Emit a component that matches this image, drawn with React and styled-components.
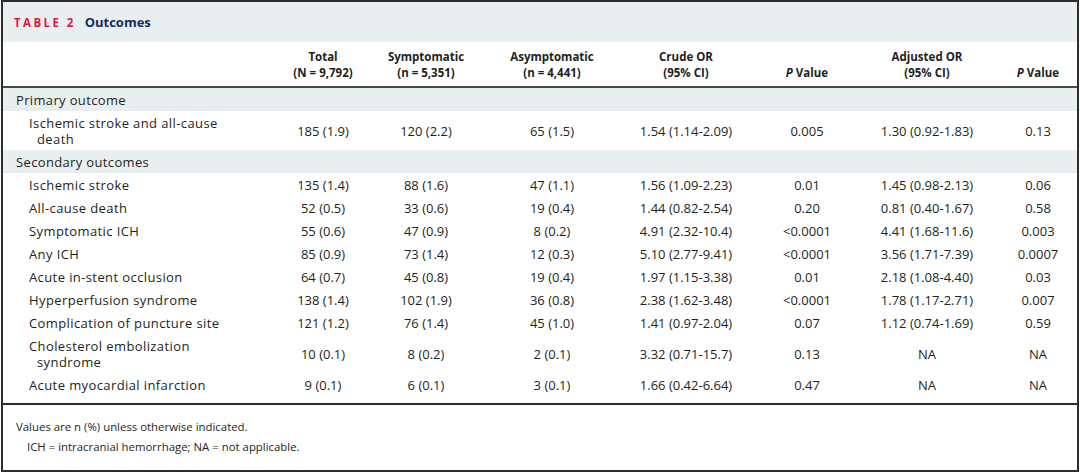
import React from "react";
import styled, { createGlobalStyle } from "styled-components";

const GlobalStyle = createGlobalStyle`
  html, body {
    margin: 0;
    padding: 0;
    background: #ffffff;
  }
  body {
    font-family: "Open Sans", "Noto Sans", sans-serif;
    color: #231f20;
  }
`;

const Frame = styled.div`
  box-sizing: border-box;
  width: 1078px;
  height: 472px;
  margin: 0 1px;
  border: 2px solid #2d2d2d;
  display: flex;
  flex-direction: column;
  background: #fff;
`;

const TitleBar = styled.div`
  height: 40px;
  background: #e9eff0;
  display: flex;
  align-items: center;
  gap: 9px;
  padding: 0 11px;
  font-weight: 700;
`;

const Label = styled.span`
  color: #e3193e;
  font-size: 11.5px;
  letter-spacing: 2.4px;
`;

const Caption = styled.span`
  color: #182c59;
  font-size: 13px;
`;

const Table = styled.table`
  width: 100%;
  border-collapse: collapse;
  table-layout: fixed;
  font-size: 13px;
  line-height: 16px;
`;

const Th = styled.th`
  font-size: 11.5px;
  font-weight: 700;
  text-align: center;
  vertical-align: bottom;
  padding: 7px 4px 5px ${({ $pl }) => $pl || 4}px;
  border-bottom: 2px solid #4a4a4a;
  white-space: nowrap;
`;

const SectionCell = styled.td`
  background: #e9eff0;
  padding: 3.5px 13px;
  height: 16px;
  letter-spacing: 0.35px;
`;

const NameCell = styled.td`
  text-align: left;
  padding: 3.5px 36px 3.5px 34px;
  text-indent: -8px;
  letter-spacing: 0.4px;
`;

const Cell = styled.td`
  text-align: center;
  padding: 3.5px 4px 3.5px ${({ $pl }) => $pl || 4}px;
  white-space: nowrap;
`;

const Row = styled.tr`
  ${({ $last }) =>
    $last &&
    `
    border-bottom: 2px solid #2d2d2d;
    td { padding-bottom: 10px; }
  `}
`;

const Notes = styled.div`
  padding: 12px 13px;
  font-size: 11.4px;
  line-height: 20px;
`;

const Note = styled.div`
  padding-left: ${({ $indent }) => ($indent ? 11 : 0)}px;
`;

const cols = [268, 104, 102, 150, 118, 124, 116, 92];

const outcomes = [
  ["Ischemic stroke", "135 (1.4)", "88 (1.6)", "47 (1.1)", "1.56 (1.09-2.23)", "0.01", "1.45 (0.98-2.13)", "0.06"],
  ["All-cause death", "52 (0.5)", "33 (0.6)", "19 (0.4)", "1.44 (0.82-2.54)", "0.20", "0.81 (0.40-1.67)", "0.58"],
  ["Symptomatic ICH", "55 (0.6)", "47 (0.9)", "8 (0.2)", "4.91 (2.32-10.4)", "<0.0001", "4.41 (1.68-11.6)", "0.003"],
  ["Any ICH", "85 (0.9)", "73 (1.4)", "12 (0.3)", "5.10 (2.77-9.41)", "<0.0001", "3.56 (1.71-7.39)", "0.0007"],
  ["Acute in-stent occlusion", "64 (0.7)", "45 (0.8)", "19 (0.4)", "1.97 (1.15-3.38)", "0.01", "2.18 (1.08-4.40)", "0.03"],
  ["Hyperperfusion syndrome", "138 (1.4)", "102 (1.9)", "36 (0.8)", "2.38 (1.62-3.48)", "<0.0001", "1.78 (1.17-2.71)", "0.007"],
  ["Complication of puncture site", "121 (1.2)", "76 (1.4)", "45 (1.0)", "1.41 (0.97-2.04)", "0.07", "1.12 (0.74-1.69)", "0.59"],
  ["Cholesterol embolization syndrome", "10 (0.1)", "8 (0.2)", "2 (0.1)", "3.32 (0.71-15.7)", "0.13", "NA", "NA"],
  ["Acute myocardial infarction", "9 (0.1)", "6 (0.1)", "3 (0.1)", "1.66 (0.42-6.64)", "0.47", "NA", "NA"],
];

const DataRow = ({ values, last }) => {
  const [name, ...rest] = values;
  return (
    <Row $last={last}>
      <NameCell>{name}</NameCell>
      {rest.map((v, i) => (
        <Cell key={i} $pl={i === rest.length - 1 ? 18 : 4}>
          {v}
        </Cell>
      ))}
    </Row>
  );
};

const App = () => {
  return (
    <>
      <GlobalStyle />
      <Frame>
        <TitleBar>
          <Label>TABLE 2</Label>
          <Caption>Outcomes</Caption>
        </TitleBar>
        <Table>
          <colgroup>
            {cols.map((w, i) => (
              <col key={i} style={{ width: w }} />
            ))}
          </colgroup>
          <thead>
            <tr>
              <Th />
              <Th>
                Total
                <br />
                (N = 9,792)
              </Th>
              <Th>
                Symptomatic
                <br />
                (n = 5,351)
              </Th>
              <Th>
                Asymptomatic
                <br />
                (n = 4,441)
              </Th>
              <Th>
                Crude OR
                <br />
                (95% CI)
              </Th>
              <Th>
                <i>P</i> Value
              </Th>
              <Th>
                Adjusted OR
                <br />
                (95% CI)
              </Th>
              <Th $pl={18}>
                <i>P</i> Value
              </Th>
            </tr>
          </thead>
          <tbody>
            <tr>
              <SectionCell colSpan={8}>Primary outcome</SectionCell>
            </tr>
            <DataRow
              values={[
                "Ischemic stroke and all-cause death",
                "185 (1.9)",
                "120 (2.2)",
                "65 (1.5)",
                "1.54 (1.14-2.09)",
                "0.005",
                "1.30 (0.92-1.83)",
                "0.13",
              ]}
            />
            <tr>
              <SectionCell colSpan={8}>Secondary outcomes</SectionCell>
            </tr>
            {outcomes.map((o, i) => (
              <DataRow key={o[0]} values={o} last={i === outcomes.length - 1} />
            ))}
          </tbody>
        </Table>
        <Notes>
          <Note>Values are n (%) unless otherwise indicated.</Note>
          <Note $indent>ICH = intracranial hemorrhage; NA = not applicable.</Note>
        </Notes>
      </Frame>
    </>
  );
};

export default App;
